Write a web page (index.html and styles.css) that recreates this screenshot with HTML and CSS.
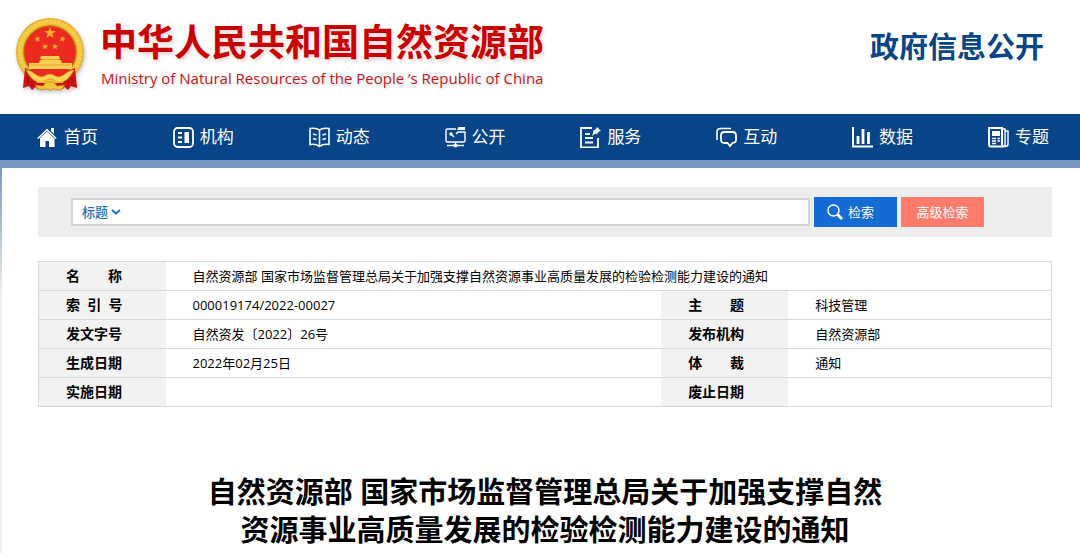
FILE: index.html
```html
<!DOCTYPE html>
<html lang="zh-CN">
<head>
<meta charset="utf-8">
<meta name="viewport" content="width=device-width, initial-scale=1">
<title>中华人民共和国自然资源部 - 政府信息公开</title>
<link rel="stylesheet" href="styles.css">
</head>
<body>
<header class="header">
  <div class="brand">
    <svg class="emblem" viewBox="0 0 72 78" aria-hidden="true">
      <defs>
        <radialGradient id="gold" cx=".5" cy=".5" r=".5">
          <stop offset=".76" stop-color="#c9860f"/><stop offset=".82" stop-color="#f3c53a"/><stop offset=".92" stop-color="#f8d650"/><stop offset="1" stop-color="#dda01c"/>
        </radialGradient>
        <path id="star" d="M0-6 1.5-1.9 5.8-1.9 2.4.8 3.6 5 0 2.5-3.6 5-2.4.8-5.8-1.9-1.5-1.9Z"/>
      </defs>
      <circle cx="35" cy="35" r="34" fill="url(#gold)"/>
      <circle cx="35" cy="35" r="31" fill="none" stroke="#e8b836" stroke-width="2" stroke-dasharray="1 3"/>
      <circle cx="35" cy="35" r="26" fill="#ed2a20" stroke="#b9780f" stroke-width=".8"/>
      <g fill="#f2ad2a">
        <use href="#star" x="35" y="16"/>
        <use href="#star" transform="translate(22.500 22) rotate(-15) scale(.55)"/>
        <use href="#star" transform="translate(47.500 22) rotate(15) scale(.55)"/>
        <use href="#star" transform="translate(30 29.500) scale(.55)"/>
        <use href="#star" transform="translate(40 29.500) scale(.55)"/>
      </g>
      <path d="M26 39h18l1 3h-2v1h3l1 3h10v6H14v-6h10l1-3h2v-1h-2Z" fill="#f9cd52"/>
      <path d="M26 42.500h18M16 48h39" stroke="#e9992b" stroke-width=".8"/>
      <path d="M13 53h45L49 58 35 61 22 58Z" fill="#ea2a1d"/>
      <path d="M10 51 8 71l6-2 3 4 6-5-6-14Z" fill="#d11313"/>
      <path d="M60 51l2 20-6-2-3 4-6-5 6-14Z" fill="#d11313"/>
      <path d="M20 66h30l-2 6H22Z" fill="#d11313"/>
      <path d="M11 53c7 0 9 6 15 7 4 0 5-3 9-3s5 3 9 3c6-1 8-7 15-7-3 5-6 11-13 12-5 1-7-3-11-3s-6 4-11 3c-7-1-10-7-13-12Z" fill="#f9d650" stroke="#d48b19" stroke-width=".6"/>
      <path d="M20 68l8 1 3-4h8l3 4 8-1-4 5-9-1-2 2-2-2-9 1Z" fill="#f5c636" stroke="#cd6412" stroke-width=".6"/>
      <path d="M13 60v8M17 64v6M57 60v8M53 64v6" stroke="#8f0910" stroke-width=".8"/>
    </svg>
    <div class="brand-text">
      <div class="brand-name">中华人民共和国自然资源部</div>
      <div class="brand-en">Ministry of Natural Resources of the People ’s Republic of China</div>
    </div>
  </div>
  <div class="section-name">政府信息公开</div>
</header>

<nav class="nav" aria-label="主导航">
  <a class="nav-item" href="#home">
    <svg class="nav-icon" viewBox="0 0 21 21"><path class="solid" d="M3 11 10 4.500 17.500 11.500V20H12v-6H8.500v6H3Z"/><path d="M.8 11.500 10 2.800l9.200 8.700" stroke-width="1.500"/><path class="solid" d="M14 1h3v6l-3-3Z"/></svg>首页</a>
  <a class="nav-item" href="#org">
    <svg class="nav-icon" viewBox="0 0 21 21"><rect x="1" y="1" width="19" height="19" rx="3.500" stroke-width="1.800"/><path d="M5 6h4M5 10.500h4M5 15h4" stroke-width="2.200"/><path class="solid" d="M11.500 5H16v11h-4.500Z"/></svg>机构</a>
  <a class="nav-item" href="#news">
    <svg class="nav-icon" viewBox="0 0 21 21"><path d="M10.500 3C8 1 4 1 1 1.500v16c3-.5 7 0 9.500 2 2.500-2 6.500-2.500 9.500-2v-16C17 1 13 1 10.500 3Zm0 0v16M4 7l3.500 1M4 11.500l3.500 1M17 7l-3.500 1M17 11.500l-3.500 1" stroke-width="1.600"/></svg>动态</a>
  <a class="nav-item" href="#open">
    <svg class="nav-icon" viewBox="0 0 21 21"><path d="M11 2H2.500Q1 2 1 3.500v10Q1 15 2.500 15h16q1.500 0 1.500-1.500V5h-7l-2 2M10.500 15v3M2 18.500h17"/><path class="solid" d="M13.500 0H20v3h-8Z"/><circle class="solid" cx="6" cy="7" r="1.700"/><path d="m6 7 3 3"/><circle class="solid" cx="10.500" cy="18.500" r="2"/></svg>公开</a>
  <a class="nav-item" href="#service">
    <svg class="nav-icon" viewBox="0 0 21 21"><path d="M12 1H1v19.500h17V11M5 7h5M5 11h8M5 15.500h8" stroke-width="1.800"/><path class="solid" d="m17 0 4 4-2 .5-2.500 3-1-1L12 9l1.500-4.500L13 4l3-2Z"/></svg>服务</a>
  <a class="nav-item" href="#interact">
    <svg class="nav-icon" viewBox="0 0 21 21"><path d="M1 13V5q0-3.500 3.500-3.500H15" stroke-width="1.600"/><path d="M8.500 5h8q3.500 0 3.500 3.500v4q0 3.500-3.500 3.500L14 19l-2.500-3h-3Q5 16 5 12.500v-4Q5 5 8.500 5Z" stroke-width="1.800"/></svg>互动</a>
  <a class="nav-item" href="#data">
    <svg class="nav-icon" viewBox="0 0 21 21"><path d="M1 0v19.500h20" stroke-width="2"/><path d="M6 9v8M11 2v15M16.500 5v12" stroke-width="2.800"/></svg>数据</a>
  <a class="nav-item" href="#topics">
    <svg class="nav-icon" viewBox="0 0 21 21"><path d="M1 1h13v18.500H3q-2 0-2-2Z" stroke-width="2"/><path d="M14 2h3v17h-3M17 4h3v13q0 2.500-3 2.500h-4"/><path class="solid" d="M4 4h8v5H4Z"/><path d="M4 11.500h4M4 14h4M4 16.500h4M9.500 11.500H12M9.500 14H12"/></svg>专题</a>
</nav>

<main class="content">
  <form class="search">
    <div class="search-box">
      <label class="field-wrap">
        <select class="search-field" aria-label="检索字段"><option>标题</option><option>正文</option></select>
        <svg class="chevron" viewBox="0 0 10 6" aria-hidden="true"><path d="m1 1 4 3.500 4-3.500"/></svg>
      </label>
      <input class="search-input" type="text" aria-label="检索内容">
    </div>
    <button class="btn btn-search" type="submit"><svg class="lens" viewBox="0 0 16 16" aria-hidden="true"><circle cx="6.500" cy="6.500" r="5.500"/><path d="m10.500 10.500 4.500 4.500" stroke-width="2.800"/></svg>检索</button>
    <button class="btn btn-advanced" type="button">高级检索</button>
  </form>

  <table class="meta">
    <colgroup><col class="col-label"><col class="col-wide"><col class="col-label"><col class="col-value"></colgroup>
    <tr><th scope="row">名　　称</th><td colspan="3">自然资源部 国家市场监督管理总局关于加强支撑自然资源事业高质量发展的检验检测能力建设的通知</td></tr>
    <tr><th scope="row">索&nbsp;&nbsp;引&nbsp;&nbsp;号</th><td>000019174/2022-00027</td><th scope="row">主　　题</th><td>科技管理</td></tr>
    <tr><th scope="row">发文字号</th><td>自然资发〔2022〕26号</td><th scope="row">发布机构</th><td>自然资源部</td></tr>
    <tr><th scope="row">生成日期</th><td>2022年02月25日</td><th scope="row">体　　裁</th><td>通知</td></tr>
    <tr><th scope="row">实施日期</th><td></td><th scope="row">废止日期</th><td></td></tr>
  </table>

  <h1 class="title">自然资源部 国家市场监督管理总局关于加强支撑自然<br>资源事业高质量发展的检验检测能力建设的通知</h1>
</main>
</body>
</html>
```

FILE: styles.css
```css
* { box-sizing: border-box; }

body {
  margin: 0;
  background: #fff;
  color: #000;
  font-family: "Open Sans", "Noto Sans CJK SC", sans-serif;
  font-size: 13px;
}

.header {
  display: flex;
  justify-content: space-between;
  align-items: flex-start;
  height: 114px;
  padding: 17px 36px 0 15px;
}

.brand { display: flex; gap: 13px; }

.emblem {
  width: 72px;
  height: 78px;
  filter: drop-shadow(1px 2px 2px rgba(0, 0, 0, .25));
}

.brand-name {
  color: #c80000;
  font-size: 37px;
  font-weight: 700;
  line-height: 50px;
  white-space: nowrap;
  text-shadow: 2px 3px 3px rgba(200, 0, 0, .15);
}

.brand-en {
  padding-left: 1px;
  color: #c4161c;
  font-size: 15px;
  line-height: 22px;
  white-space: nowrap;
  text-shadow: 1px 2px 2px rgba(0, 0, 0, .15);
}

.section-name {
  padding-top: 8px;
  color: #084488;
  font-size: 29px;
  font-weight: 700;
  line-height: 44px;
  white-space: nowrap;
}

.nav {
  display: flex;
  justify-content: space-between;
  align-items: center;
  height: 54px;
  padding: 0 31px 0 37px;
  border-bottom: 8px solid #7799c1;
  background: #084488;
}

.nav-item {
  display: flex;
  align-items: center;
  gap: 6px;
  color: #fff;
  font-size: 17px;
  line-height: 24px;
  text-decoration: none;
}

.nav-icon {
  width: 21px;
  height: 21px;
  fill: none;
  stroke: #fff;
  stroke-width: 1.4;
}

.nav-icon .solid { fill: #fff; stroke: none; }

.content {
  padding: 19px 28px 20px 38px;
  background: linear-gradient(#7799c1, #f0f1f5 130px) left top / 2px 100% no-repeat;
}

.search {
  display: flex;
  align-items: center;
  gap: 4px;
  height: 50px;
  padding: 0 68px 0 33px;
  background: #ededed;
}

.search-box {
  display: flex;
  flex: 1;
  height: 28px;
  border: 2px solid #d4d4d4;
  background: #fff;
}

.field-wrap {
  display: flex;
  align-items: center;
  gap: 3px;
  padding-left: 9px;
}

.search-field {
  appearance: none;
  width: 26px;
  padding: 0;
  border: 0;
  background: none;
  color: #1a72c4;
  font: 500 13px/24px "Noto Sans CJK SC", sans-serif;
}

.chevron {
  width: 10px;
  height: 6px;
  fill: none;
  stroke: #1a72c4;
  stroke-width: 2;
}

.search-input {
  flex: 1;
  min-width: 0;
  border: 0;
  padding: 0 8px;
  background: none;
  outline: 0;
}

.btn {
  display: flex;
  justify-content: center;
  align-items: center;
  width: 83px;
  height: 30px;
  padding: 0;
  border: 0;
  color: #fff;
  font: 13px/20px "Open Sans", "Noto Sans CJK SC", sans-serif;
}

.btn-search { justify-content: flex-start; gap: 5px; padding-left: 13px; background: #156bd4; }
.btn-advanced { background: #ff7b6b; }

.lens {
  width: 16px;
  height: 16px;
  fill: none;
  stroke: #fff;
  stroke-width: 1.4;
}

.meta {
  width: 100%;
  margin-top: 24px;
  border: 1px solid #d9d9d9;
  border-collapse: collapse;
  table-layout: fixed;
}

.col-label { width: 127px; }
.col-value { width: 26%; }

.meta th,
.meta td {
  height: 29px;
  padding: 0 0 0 27px;
  border-bottom: 1px solid #d9d9d9;
  line-height: 28px;
  text-align: left;
  white-space: nowrap;
}

.meta th { background: #f2f2f2; font-size: 14px; font-weight: 700; }
.meta td { font-size: 13px; }

.title {
  margin: 0;
  padding-top: 66px;
  font-size: 29px;
  font-weight: 700;
  line-height: 38px;
  text-align: center;
}
```
